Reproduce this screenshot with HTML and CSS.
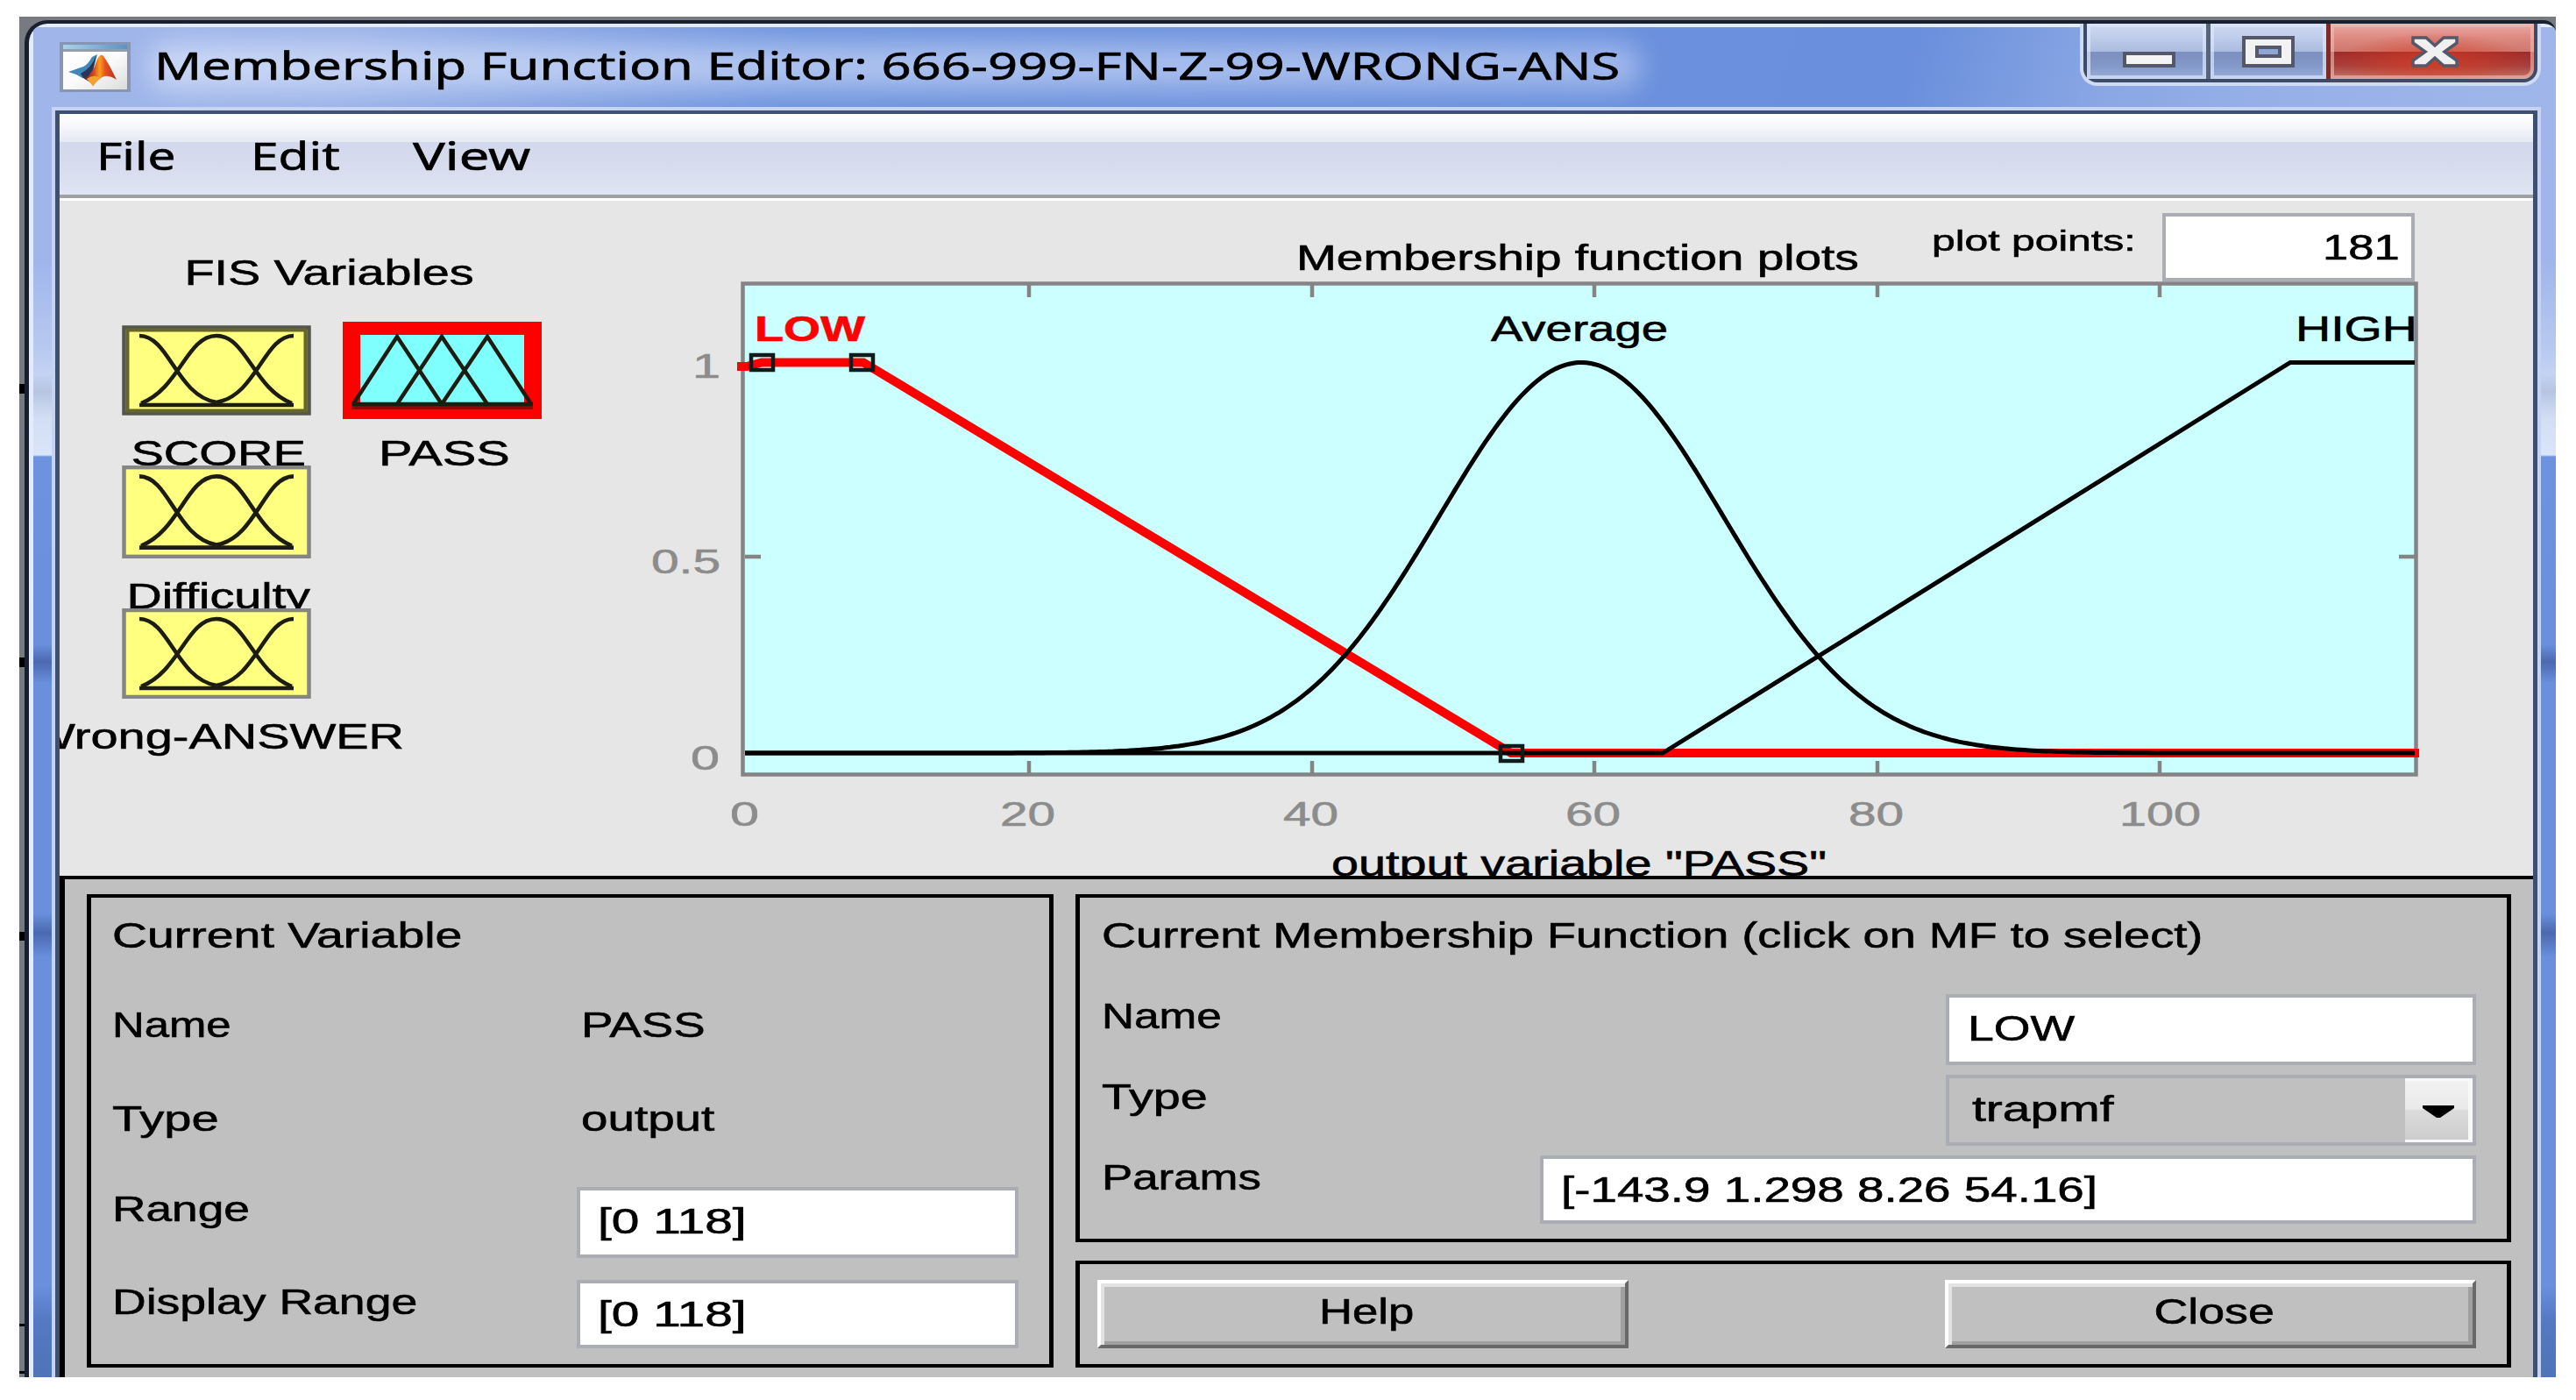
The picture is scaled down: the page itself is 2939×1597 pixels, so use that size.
FILE: index.html
```
<!DOCTYPE html>
<html lang="en">
<head>
  <meta charset="UTF-8">
  <title>Membership Function Editor</title>
  <link rel="stylesheet" href="styles.css">
</head>
<body>
  <div class="desktop">
    <div class="window">
      <div class="titlebar">
        <svg class="app-icon" viewBox="0 0 81 57">
          <defs>
            <linearGradient id="iconBg" x1="0" y1="0" x2="1" y2="1">
              <stop offset="0" stop-color="#fff"/>
              <stop offset=".5" stop-color="#fafafa"/>
              <stop offset="1" stop-color="#dcdcdc"/>
            </linearGradient>
            <linearGradient id="iconBar" x1="0" y1="0" x2="1" y2="0">
              <stop offset="0" stop-color="#a9d3ea"/>
              <stop offset="1" stop-color="#5b93c4"/>
            </linearGradient>
            <linearGradient id="peak" x1="0" y1="0" x2="1" y2="0">
              <stop offset="0" stop-color="#5c2430"/>
              <stop offset=".3" stop-color="#d8481c"/>
              <stop offset=".48" stop-color="#f9a01e"/>
              <stop offset=".65" stop-color="#e8501f"/>
              <stop offset="1" stop-color="#b03324"/>
            </linearGradient>
          </defs>
          <rect width="81" height="57" fill="#8795b4"/>
          <rect x="4" y="3" width="73" height="5" fill="url(#iconBar)"/>
          <rect x="4" y="8" width="73" height="3" fill="#939dad"/>
          <rect x="4" y="11" width="73" height="43" fill="url(#iconBg)"/>
          <path d="M10 34 L24 29 Q31 28 37 17 L43 14 L36 40 L26 41 L19 37 Z" fill="#3f87bb"/>
          <path d="M24 36 Q36 30 42 15 L35 46 L27 41 Z" fill="#2b3558"/>
          <path d="M28 42 Q38 36 42 22 Q46 12 50 16 Q57 26 65 43 Q57 38 51 39 Q45 41 38 50 Q34 42 28 42 Z" fill="url(#peak)"/>
          <path d="M31 42 Q39 36 46 41 L38 50 Z" fill="#f4a032"/>
        </svg>
        <span class="title"><span class="fit" data-w="1672">Membership Function Editor: 666-999-FN-Z-99-WRONG-ANS</span></span>
        <div class="controls">
          <div class="control minimize">
            <svg viewBox="0 0 60 36"><rect x="2" y="20" width="56" height="14" fill="#f4f4f4" stroke="#555869" stroke-width="4"/></svg>
          </div>
          <div class="control maximize">
            <svg viewBox="0 0 60 36">
              <rect x="2" y="2" width="56" height="32" fill="#f2f2f2" stroke="#555869" stroke-width="4"/>
              <rect x="17" y="13" width="26" height="10" fill="#8ea6d4" stroke="#555869" stroke-width="4"/>
            </svg>
          </div>
          <div class="control close">
            <svg viewBox="0 0 60 36"><path d="M5 2 H20 L30 11 L40 2 H55 V8 L41 18 L55 28 V34 H40 L30 25 L20 34 H5 V28 L19 18 L5 8 Z" fill="#f0f0f0" stroke="#555869" stroke-width="3.5"/></svg>
          </div>
        </div>
      </div>

      <div class="client">
        <div class="menu">
          <span class="item"><span class="fit" data-w="90">File</span></span>
          <span class="item"><span class="fit" data-w="102">Edit</span></span>
          <span class="item"><span class="fit" data-w="134">View</span></span>
        </div>

        <div class="canvas">
          <div class="variables">
            <div class="heading"><span class="fit center" data-w="330">FIS Variables</span></div>
            <div class="columns">
              <div class="inputs">
                <div class="var">
                  <svg class="tile current" viewBox="0 0 216 103" preserveAspectRatio="none">
                    <defs>
                      <path id="bells" d="M20 12 C54 12 62 80 108 88 M22 89 C66 72 74 12 108 12 C142 12 150 72 194 89 M196 12 C162 12 154 80 108 88"/>
                    </defs>
                    <rect class="box" x="2.5" y="2.5" width="211" height="98"/>
                    <rect class="inner" x="6.5" y="5.5" width="203" height="92"/>
                    <use class="mf" href="#bells"/>
                    <path class="base" d="M20 91 H196"/>
                  </svg>
                  <div class="caption"><span class="fit center" data-w="199">SCORE</span></div>
                </div>
                <div class="var">
                  <svg class="tile tall" viewBox="0 0 216 103" preserveAspectRatio="none">
                    <rect class="box" x="2.5" y="2" width="211" height="99"/>
                    <use class="mf" href="#bells"/>
                    <path class="base" d="M20 91 H196"/>
                  </svg>
                  <div class="caption"><span class="fit center" data-w="209">Difficulty</span></div>
                </div>
                <div class="var last">
                  <svg class="tile" viewBox="0 0 216 103" preserveAspectRatio="none">
                    <rect class="box" x="2.5" y="2" width="211" height="99"/>
                    <use class="mf" href="#bells"/>
                    <path class="base" d="M20 91 H196"/>
                  </svg>
                  <div class="caption"><span class="fit center" data-w="428">Wrong-ANSWER</span></div>
                </div>
              </div>
              <div class="outputs">
                <svg class="tile-out" viewBox="0 0 227 111">
                  <rect width="227" height="111" fill="#f00"/>
                  <rect x="20" y="15" width="187" height="81" fill="#80ffff"/>
                  <rect x="10" y="96" width="207" height="4" fill="#900"/>
                  <path class="mf" d="M12 94 L62 17 L113 94 M62 94 L113 17 L165 94 M113 94 L165 17 L215 94"/>
                  <path class="base" d="M10 94 H217"/>
                </svg>
                <div class="caption"><span class="fit center" data-w="150">PASS</span></div>
              </div>
            </div>
          </div>

          <div class="plot">
            <div class="plot-head">
              <div class="plot-title"><span class="fit" data-w="642">Membership function plots</span></div>
              <div class="points-label"><span class="fit" data-w="232">plot points:</span></div>
              <div class="field points"><span class="fit right" data-w="88">181</span></div>
            </div>
            <svg class="chart" viewBox="700 321 2190 678">
              <rect x="847.5" y="323.5" width="1909" height="560" fill="#ccffff" stroke="#848484" stroke-width="4.5"/>
              <path class="ticks" d="M1174 325v14 M1497 325v14 M1819 325v14 M2142 325v14 M2464 325v14
                M1174 882v-14 M1497 882v-14 M1819 882v-14 M2142 882v-14 M2464 882v-14
                M850 635h18 M2755 635h-18"/>
              <path class="low" d="M841 418 L852 418 L869 413.5 H985 L1724 859 H2760"/>
              <path class="curve" d="M850 859 H1897 L2613 413.5 H2755"/>
              <path class="curve" id="average"/>
              <g class="handles">
                <rect x="857" y="405" width="25" height="17"/>
                <rect x="971" y="405" width="25" height="17"/>
                <rect x="1712" y="851" width="25" height="17"/>
              </g>
              <g class="labels">
                <text class="selected" x="861" y="389" textLength="126" lengthAdjust="spacingAndGlyphs">LOW</text>
                <text x="1701" y="389" textLength="202" lengthAdjust="spacingAndGlyphs">Average</text>
                <text x="2619" y="389" textLength="139" lengthAdjust="spacingAndGlyphs">HIGH</text>
                <text x="1519" y="999" textLength="565" lengthAdjust="spacingAndGlyphs">output variable "PASS"</text>
              </g>
              <g class="axis">
                <text x="790" y="431" textLength="32" lengthAdjust="spacingAndGlyphs">1</text>
                <text x="743" y="654" textLength="79" lengthAdjust="spacingAndGlyphs">0.5</text>
                <text x="788" y="878" textLength="33" lengthAdjust="spacingAndGlyphs">0</text>
                <text x="833" y="942" textLength="33" lengthAdjust="spacingAndGlyphs">0</text>
                <text x="1141" y="942" textLength="63" lengthAdjust="spacingAndGlyphs">20</text>
                <text x="1464" y="942" textLength="63" lengthAdjust="spacingAndGlyphs">40</text>
                <text x="1786" y="942" textLength="63" lengthAdjust="spacingAndGlyphs">60</text>
                <text x="2109" y="942" textLength="63" lengthAdjust="spacingAndGlyphs">80</text>
                <text x="2418" y="942" textLength="93" lengthAdjust="spacingAndGlyphs">100</text>
              </g>
            </svg>
          </div>
        </div>

        <div class="panel">
          <div class="frame variable">
            <div class="row r1"><span class="fit" data-w="399">Current Variable</span></div>
            <div class="row r2"><span class="key"><span class="fit" data-w="136">Name</span></span><span class="fit" data-w="142">PASS</span></div>
            <div class="row r3"><span class="key"><span class="fit" data-w="122">Type</span></span><span class="fit" data-w="152">output</span></div>
            <div class="row r4"><span class="key"><span class="fit" data-w="157">Range</span></span><div class="field range"><span class="fit" data-w="169">[0 118]</span></div></div>
            <div class="row r5"><span class="key"><span class="fit" data-w="348">Display Range</span></span><div class="field range short"><span class="fit" data-w="169">[0 118]</span></div></div>
          </div>

          <div class="side">
            <div class="frame function">
              <div class="row"><span class="fit" data-w="1256">Current Membership Function (click on MF to select)</span></div>
              <div class="row"><span class="fit" data-w="137">Name</span><div class="field name"><span class="fit" data-w="122">LOW</span></div></div>
              <div class="row">
                <span class="fit" data-w="121">Type</span>
                <div class="field name select">
                  <span class="fit" data-w="161">trapmf</span>
                  <div class="arrow"><svg viewBox="0 0 36 14"><path d="M0 0 H36 V3 L20 14 H16 L0 3 Z"/></svg></div>
                </div>
              </div>
              <div class="row"><span class="fit" data-w="182">Params</span><div class="field params short"><span class="fit" data-w="612">[-143.9 1.298 8.26 54.16]</span></div></div>
            </div>
            <div class="frame actions">
              <button><span class="fit center" data-w="108">Help</span></button>
              <button><span class="fit center" data-w="137">Close</span></button>
            </div>
          </div>
        </div>
      </div>
    </div>
  </div>

  <script>
    // stretch every label to its own width
    document.querySelectorAll('.fit').forEach(function (el) {
      el.style.transform = 'scaleX(' + (el.dataset.w / el.offsetWidth) + ')';
    });

    // gaussian curve of the "Average" function
    const center = 1804, sigma = 162, zero = 859, top1 = 413.5;
    let d = '';
    for (let x = 850; x <= 2755; x += 5) {
      const v = Math.exp(-Math.pow(x - center, 2) / (2 * sigma * sigma));
      d += (d ? 'L' : 'M') + x + ' ' + (zero - v * (zero - top1)).toFixed(1);
    }
    document.getElementById('average').setAttribute('d', d);
  </script>
</body>
</html>
```
FILE: styles.css
```
* {
  box-sizing: border-box;
}

body {
  margin: 0;
  background: #fff;
  font-family: "Liberation Sans", Arial, sans-serif;
  font-size: 40px;
  line-height: 44px;
  color: #000;
  overflow: hidden;
}

.fit {
  display: inline-block;
  flex: none;
  white-space: nowrap;
  transform-origin: left center;
  -webkit-text-stroke: 0.6px;
}

.fit.center {
  transform-origin: center;
}

.fit.right {
  transform-origin: right center;
}

.desktop {
  width: 2894px;
  height: 1552px;
  margin: 19px 0 0 22px;
  padding: 4px 0 0 6px;
  overflow: hidden;
  background:
    linear-gradient(#000, #000) 0 419px / 6px 11px no-repeat,
    linear-gradient(#000, #000) 0 731px / 6px 11px no-repeat,
    linear-gradient(#000, #000) 0 1044px / 6px 10px no-repeat,
    linear-gradient(#000, #000) 0 1491px / 6px 3px no-repeat,
    linear-gradient(#000, #000) 0 1545px / 6px 3px no-repeat,
    #777a80;
}

.window {
  height: 1548px;
  border-top: 4px solid #182030;
  border-left: 5px solid #182030;
  border-radius: 26px 14px 0 0;
  overflow: hidden;
  box-shadow: inset 5px 4px 0 #e4ebfa;
  background: linear-gradient(#a0b6ea 0, #a0b6ea 270px, #b8c9f0 370px, #c4d3f2 400px,
    #b7c5e2 419px, #d2def4 450px, #dae5f8 492px, #6d92de 494px, #6a8fdc 708px,
    #4a69b0 728px, #6a8fdc 752px, #6a8fdc 1015px, #4a69b0 1037px, #6a8fdc 1065px,
    #6a8fdc 1440px, #5478c2 1480px, #5074b8 1544px);
}

.titlebar {
  display: flex;
  align-items: center;
  height: 95px;
  margin: 4px 0 0 5px;
  background: linear-gradient(105deg, #a0b6ea 0, #9db4e9 350px, #6f94de 850px, #6a8fdc 2080px, #8aa7e4 2300px, #97b0e8 2500px, #a0b6ea 2800px);
}

.app-icon {
  width: 81px;
  height: 57px;
  margin: 0 0 4px 30px;
}

.title {
  position: relative;
  width: 1700px;
  margin: 0 0 9px 24px;
  padding-left: 3px;
  font-family: "Noto Sans", sans-serif;
  font-size: 44px;
  line-height: 60px;
}

.title::before {
  content: "";
  position: absolute;
  inset: 6px 0 2px -4px;
  border-radius: 30px;
  background: linear-gradient(90deg, rgba(214, 225, 248, .8), rgba(200, 214, 245, .72) 40%, rgba(188, 205, 243, .66));
  filter: blur(15px);
}

.title .fit {
  position: relative;
}

.controls {
  display: flex;
  align-self: flex-start;
  height: 67px;
  margin: -4px 21px 0 auto;
  border: 4px solid #3d4b66;
  border-top: 0;
  border-radius: 0 0 16px 16px;
  box-shadow: 0 0 0 4px #cfdbf5;
}

.control {
  display: flex;
  justify-content: center;
  padding-top: 14px;
  border-right: 5px solid #56647e;
  background: linear-gradient(#cdd8f0 0, #c2cfec 14px, #a9bbdf 32px, #7b90be 32px, #8298c8 48px, #9db0dc 64px);
  box-shadow: inset 0 0 0 4px rgba(220, 230, 250, .7);
}

.control svg {
  width: 60px;
  height: 36px;
}

.minimize {
  width: 141px;
}

.minimize svg {
  margin-left: 5px;
}

.maximize {
  width: 137px;
  border-right-color: #7c2c28;
}

.close {
  width: 232px;
  border-right: 0;
  border-radius: 0 0 12px 0;
  background:
    radial-gradient(ellipse 110px 34px at 50% 70%, rgba(216, 60, 34, .75), rgba(216, 60, 34, 0)),
    linear-gradient(#eaa9a4 0, #dd8a82 16px, #cf776c 32px, #a02a2a 32px, #a8403c 48px, #c47c70 64px);
  box-shadow: inset 0 0 0 4px rgba(240, 190, 185, .6);
}

.close svg {
  margin-left: 5px;
}

.client {
  width: 2832px;
  height: 1445px;
  margin-left: 30px;
  border: solid #3d5072;
  border-width: 4px 5px 0;
  box-shadow: 0 0 0 4px #c6d4f1;
}

.menu {
  display: flex;
  align-items: center;
  height: 99px;
  padding-left: 42px;
  border-bottom: 3px solid #fff;
  box-shadow: inset 0 -4px 0 #a0a0a0;
  background: linear-gradient(#fff 0, #f9fafc 10px, #e5e9f3 32px, #d3d9ec 32px, #d5daec 52px, #e0e5f5 92px);
  font-family: "Noto Sans", sans-serif;
  font-size: 44px;
  line-height: 60px;
}

.menu .item {
  width: 176px;
  margin-bottom: 3px;
}

.menu .item:nth-child(2) {
  width: 185px;
}

.canvas {
  display: flex;
  height: 770px;
  overflow: hidden;
  background: #e6e6e6;
}

.variables {
  width: 632px;
  padding: 60px 0 0 71px;
}

.heading {
  display: flex;
  justify-content: center;
  width: 474px;
}

.columns {
  display: flex;
  align-items: flex-start;
  gap: 36px;
  margin-top: 38px;
}

.inputs {
  width: 216px;
}

.outputs {
  width: 227px;
  margin-top: -4px;
}

.tile {
  display: block;
  width: 216px;
  height: 103px;
}

.tile.tall {
  height: 106px;
}

.tile-out {
  display: block;
  width: 227px;
  height: 111px;
}

.caption {
  display: flex;
  justify-content: center;
  height: 57px;
  padding: 21px 0 0 4px;
  overflow: hidden;
}

.outputs .caption {
  padding-top: 17px;
}

.last .caption {
  height: 70px;
  padding-left: 0;
  overflow: visible;
}

.box {
  fill: #ffff80;
  stroke: #858585;
  stroke-width: 4.5;
}

.current .box {
  stroke: #55564f;
}

.inner {
  fill: none;
  stroke: #66662c;
  stroke-width: 4;
}

.mf {
  fill: none;
  stroke: #1c1c10;
  stroke-width: 4.5;
}

.base {
  stroke: #1c1c10;
  stroke-width: 4.5;
}

.plot {
  width: 2190px;
}

.plot-head {
  display: flex;
  height: 92px;
  padding-left: 779px;
}

.plot-title {
  width: 725px;
  padding-top: 43px;
}

.points-label {
  width: 263px;
  padding-top: 23px;
  font-size: 34px;
}

.field {
  height: 81px;
  padding: 13px 0 0 20px;
  border: 4px solid #abadb4;
  background: #fff;
}

.field.short {
  height: 78px;
}

.field.points {
  width: 288px;
  height: 78px;
  margin-top: 14px;
  padding: 13px 13px 0 0;
  text-align: right;
}

.chart {
  display: block;
  width: 2190px;
  height: 678px;
}

.ticks {
  stroke: #848484;
  stroke-width: 4.5;
}

.low {
  fill: none;
  stroke: #f00;
  stroke-width: 10;
}

.curve {
  fill: none;
  stroke: #000;
  stroke-width: 5;
}

.handles rect {
  fill: none;
  stroke: #101c1c;
  stroke-width: 4.5;
}

.labels {
  font-size: 40px;
  stroke: #000;
  stroke-width: 0.6;
}

.labels .selected {
  fill: #f00;
  stroke: #f00;
  font-weight: bold;
}

.axis {
  font-size: 39px;
  fill: #8c8c8c;
  stroke: #8c8c8c;
  stroke-width: 0.6;
}

.panel {
  display: flex;
  gap: 25px;
  height: 572px;
  padding: 17px 0 0 25px;
  border-top: 4px solid #000;
  border-left: 6px solid #000;
  background: #c0c0c0;
}

.frame {
  border: solid #000;
  border-width: 4px 5px;
}

.variable {
  width: 1103px;
  height: 540px;
  padding: 21px 0 0 24px;
}

.row {
  display: flex;
  align-items: flex-start;
}

.row .field {
  flex: none;
  margin-top: -3px;
}

.key {
  width: 530px;
}

.r2 .key,
.r3 .key {
  width: 535px;
}

.r1 {
  height: 102px;
}

.r2 {
  height: 107px;
}

.r3 {
  height: 103px;
}

.r4 {
  height: 106px;
}

.range {
  width: 504px;
}

.side {
  width: 1638px;
}

.function {
  height: 397px;
  padding: 21px 35px 0 25px;
}

.function .row {
  justify-content: space-between;
  height: 92px;
}

.name {
  width: 605px;
  padding-left: 21px;
}

.select {
  display: flex;
  justify-content: space-between;
  padding: 0 0 0 26px;
  background: none;
}

.select .fit {
  margin-top: 13px;
}

.arrow {
  display: flex;
  justify-content: center;
  width: 77px;
  height: 73px;
  padding: 28px 0 0 3px;
  border: solid #f8f8f8;
  border-width: 3px 5px 3px 0;
  background: linear-gradient(#f2f2f2, #e9e9e9 48%, #dcdcdc 50%, #cdcdcd);
}

.arrow svg {
  width: 36px;
  height: 14px;
}

.params {
  width: 1068px;
}

.actions {
  display: flex;
  justify-content: space-between;
  height: 122px;
  margin-top: 21px;
  padding: 18px 35px 0 20px;
}

button {
  display: flex;
  justify-content: center;
  width: 606px;
  height: 78px;
  padding: 10px 0 0 8px;
  border: 4px solid;
  border-color: #fff #696969 #696969 #fff;
  background: #c0c0c0;
  box-shadow: inset 4px 4px 0 #e3e3e3, inset -5px -4px 0 #a0a0a0;
  font: inherit;
  color: #000;
}
```
